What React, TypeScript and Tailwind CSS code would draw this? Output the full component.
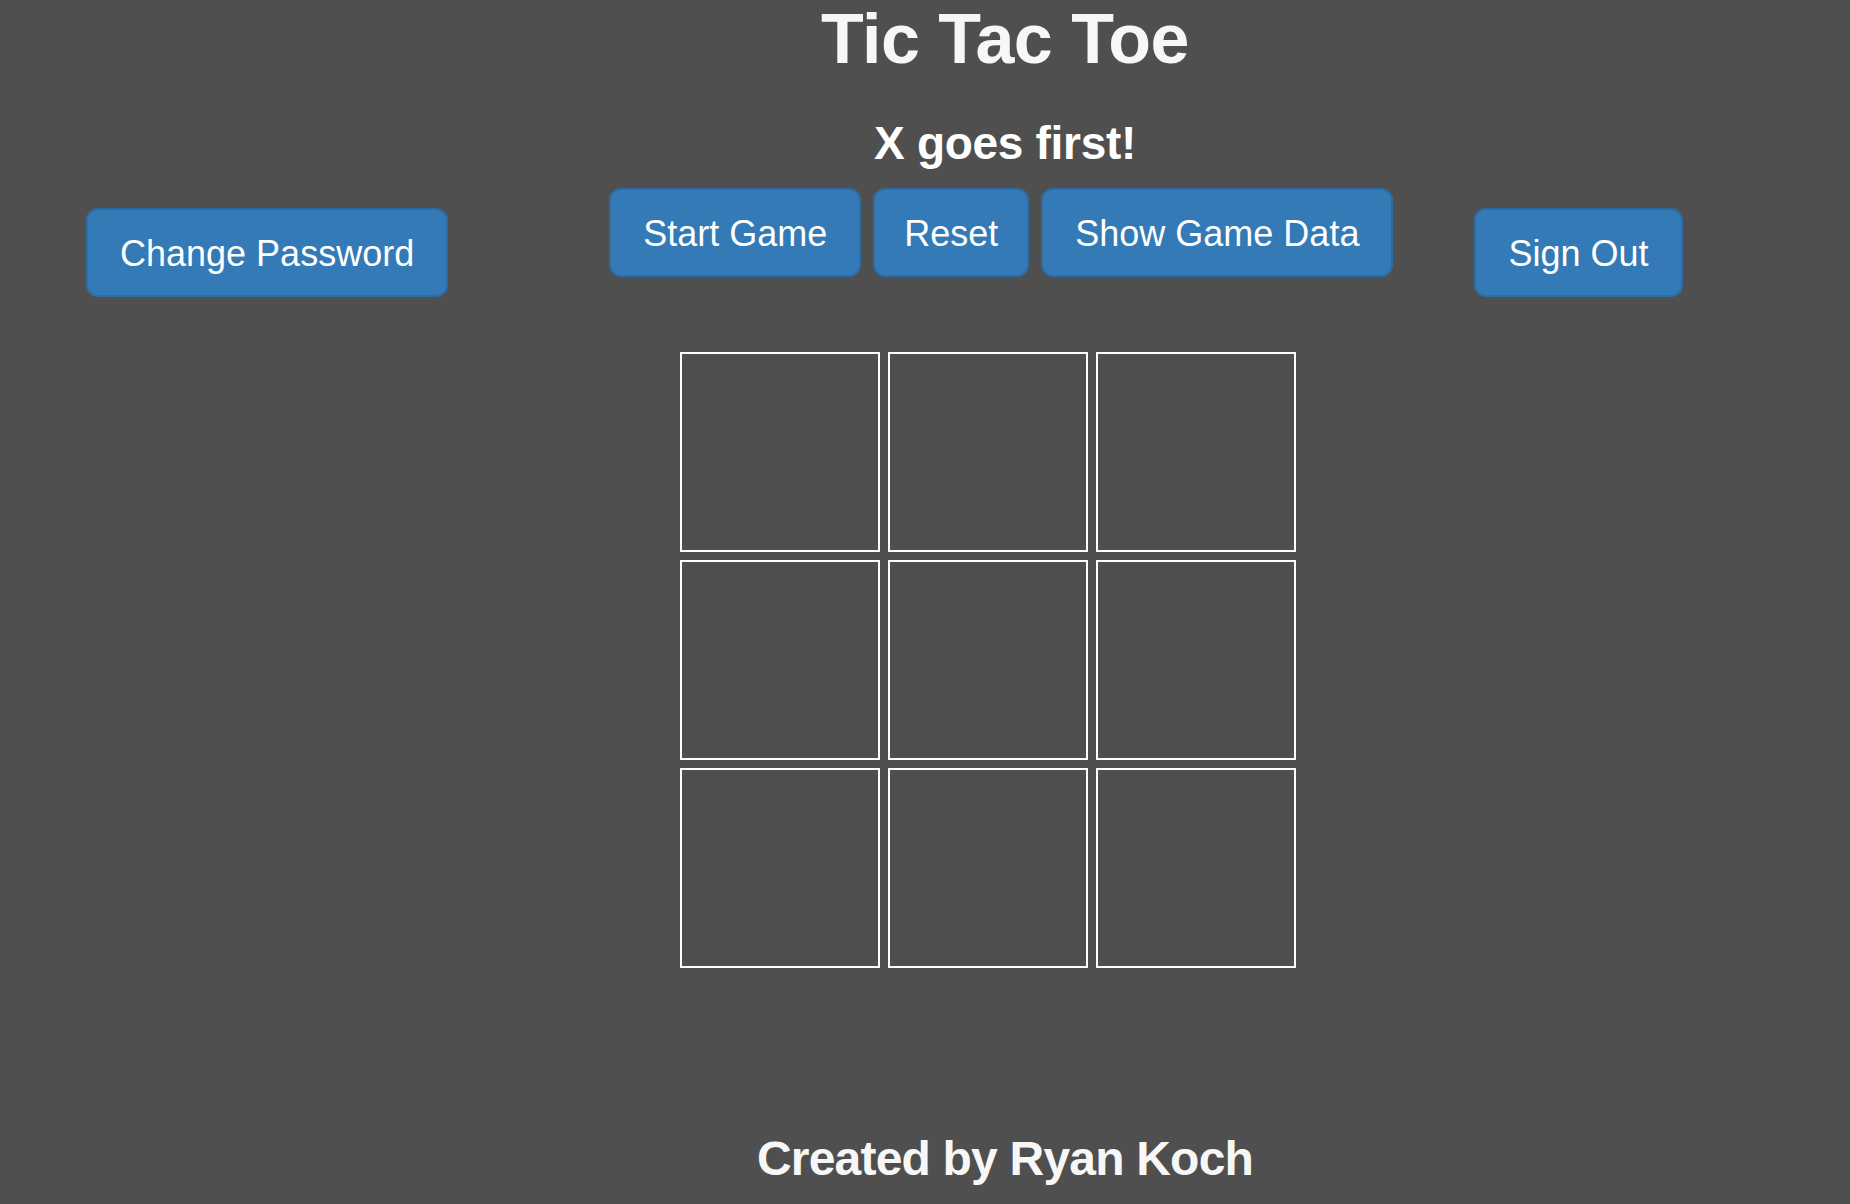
import React from "react";

const btn =
  "bg-[#337ab7] border-2 border-[#2e6da4] text-white rounded-[12px] pt-[21px] pb-[19px] text-[36px] leading-[45px] whitespace-nowrap";

export default function App() {
  return (
    <div
      className="min-h-screen w-full bg-[#4f4f4f] text-[#f7f7f7] overflow-hidden"
      style={{ fontFamily: '"Liberation Sans", Arial, sans-serif' }}
    >
      <div className="pl-[160px] text-center pt-[4px]">
        <h1 className="text-[70px] leading-[70px] font-bold tracking-[-0.5px]">Tic Tac Toe</h1>
        <h3 className="mt-[46px] text-[46px] leading-[46px] font-bold tracking-[-0.3px] text-white">
          X goes first!
        </h3>
      </div>

      <div className="flex items-start pl-[86px] mt-[22px]">
        <button className={btn + " px-[32px] mt-[20px]"}>Change Password</button>
        <div className="flex gap-[12px] ml-[161px]">
          <button className={btn + " px-[32px]"}>Start Game</button>
          <button className={btn + " px-[29px]"}>Reset</button>
          <button className={btn + " px-[32px]"}>Show Game Data</button>
        </div>
        <button className={btn + " px-[32px] mt-[20px] ml-[81px]"}>Sign Out</button>
      </div>

      <div className="flex justify-center pl-[126px] mt-[55px]">
        <div className="grid grid-cols-[200px_200px_200px] grid-rows-[200px_200px_200px] gap-[8px]">
          {Array.from({ length: 9 }).map((_, i) => (
            <div key={i} className="border-2 border-white bg-[#4f4f4f]" />
          ))}
        </div>
      </div>

      <div className="pl-[160px] text-center mt-[167px]">
        <h3 className="text-[48px] leading-[48px] font-bold tracking-[-0.8px]">Created by Ryan Koch</h3>
      </div>
    </div>
  );
}
